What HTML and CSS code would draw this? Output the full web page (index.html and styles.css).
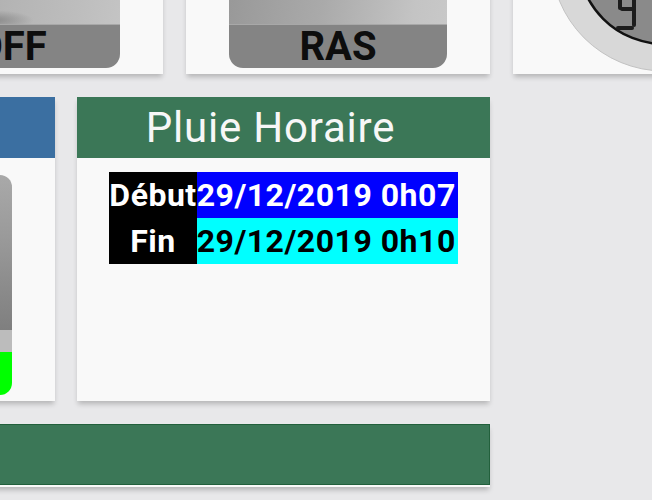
FILE: index.html
```html
<!DOCTYPE html>
<html lang="fr">
<head>
<meta charset="utf-8">
<title>Pluie Horaire</title>
<link rel="stylesheet" href="styles.css">
</head>
<body>
<div class="board">
  <div class="row row-top">
    <div class="card card-top">
      <div class="btn">
        <div class="btn-face btn-face-off"></div>
        <div class="btn-band">OFF</div>
      </div>
    </div>
    <div class="card card-top">
      <div class="btn">
        <div class="btn-face"></div>
        <div class="btn-band">RAS</div>
      </div>
    </div>
    <div class="card card-top card-gauge">
      <svg class="gauge" viewBox="0 0 304 150" width="304" height="150">
        <circle cx="151" cy="34" r="113" fill="#d8d8d8" stroke="#c2c2c2" stroke-width="1"/>
        <circle cx="151" cy="34" r="86" fill="#8a8a8a" stroke="#111" stroke-width="2.5"/>
        <g stroke="#1c1c1c" stroke-width="4" stroke-linecap="round" fill="none">
          <path d="M107 60 L107 84"/>
          <path d="M109 85 L119 85"/>
          <path d="M121 60 L121 101"/>
          <path d="M105 104 L119 104"/>
        </g>
      </svg>
    </div>
  </div>

  <div class="row row-mid">
    <div class="card card-mid">
      <div class="card-head head-blue"></div>
      <div class="card-body">
        <div class="device">
          <div class="device-top"></div>
          <div class="device-light"></div>
          <div class="device-green"></div>
        </div>
      </div>
    </div>
    <div class="card card-mid">
      <div class="card-head head-green"><span class="title">Pluie Horaire</span></div>
      <div class="card-body">
        <table class="rain">
          <tr>
            <td class="lbl">Début</td>
            <td class="val val-start">29/12/2019 0h07</td>
          </tr>
          <tr>
            <td class="lbl">Fin</td>
            <td class="val val-end">29/12/2019 0h10</td>
          </tr>
        </table>
      </div>
    </div>
  </div>

  <div class="row row-bottom">
    <div class="card card-wide">
      <div class="card-head head-green head-bordered"></div>
      <div class="card-body body-short"></div>
    </div>
  </div>
</div>
</body>
</html>
```

FILE: styles.css
```css
html, body {
  margin: 0;
  padding: 0;
}
body {
  width: 652px;
  height: 500px;
  overflow: hidden;
  background: #e8e8ea;
  font-family: Roboto, "Liberation Sans", sans-serif;
}
.board {
  display: flex;
  flex-direction: column;
  gap: 23px;
  margin-top: -76px;
}
.row {
  display: flex;
  flex-shrink: 0;
}
.row-top {
  gap: 23px;
  margin-left: -141px;
}
.row-mid {
  gap: 22px;
  margin-left: -358px;
}
.row-bottom {
  margin-left: -10px;
}
.card {
  background: #f9f9f9;
  box-shadow: 0 4px 5px -1px rgba(0, 0, 0, 0.22);
  flex-shrink: 0;
}
.card-top {
  width: 304px;
  height: 150px;
  box-sizing: border-box;
  padding: 0 43px 6px;
  display: flex;
  flex-direction: column;
  justify-content: flex-end;
}
.card-gauge {
  padding: 0;
  overflow: hidden;
}
.gauge {
  display: block;
}
.btn {
  height: 120px;
  border-radius: 4px 4px 14px 14px;
  overflow: hidden;
  display: flex;
  flex-direction: column;
}
.btn-face {
  flex: 1;
  background:
    linear-gradient(225deg, #7c7c7c 0, #8f8f8f 5%, rgba(0,0,0,0) 9%),
    linear-gradient(100deg, #979797 0%, #aaaaaa 45%, #c4c4c4 85%, #c8c8c8 100%);
}
.btn-face-off {
  background:
    linear-gradient(225deg, #7c7c7c 0, #8f8f8f 5%, rgba(0,0,0,0) 9%),
    radial-gradient(ellipse 40px 10px at 42% 95%, #8a8a8a 0, rgba(0,0,0,0) 100%),
    linear-gradient(100deg, #a0a0a0 0%, #b4b4b4 50%, #bdbdbd 80%, #c4c4c4 100%);
}
.btn-band {
  height: 43px;
  flex-shrink: 0;
  background: #848484;
  border-top: 1px solid #a8a8a8;
  display: flex;
  align-items: center;
  justify-content: center;
  font-weight: 700;
  font-size: 40px;
  line-height: 1;
  color: #0d0d0d;
}
.card-mid {
  width: 413px;
  height: 304px;
  display: flex;
  flex-direction: column;
}
.card-head {
  height: 61px;
  flex-shrink: 0;
  display: flex;
  align-items: center;
  justify-content: center;
}
.head-blue {
  background: #3b6fa1;
}
.head-green {
  background: #3b7757;
}
.title {
  color: #f7f7f7;
  font-size: 42px;
  font-weight: 400;
  letter-spacing: 0.8px;
  padding-right: 26px;
}
.card-body {
  flex: 1;
  display: flex;
  flex-direction: column;
}
.device {
  width: 200px;
  height: 220px;
  margin: 17px 43px 0 auto;
  border-radius: 4px 12px 12px 0;
  overflow: hidden;
  display: flex;
  flex-direction: column;
}
.device-top {
  flex: 1;
  background: linear-gradient(180deg, #a9a9a9 0%, #9a9a9a 40%, #7f7f7f 100%);
}
.device-light {
  height: 22px;
  background: #bcbcbc;
}
.device-green {
  height: 43px;
  background: #00ff00;
}
.rain {
  border-collapse: collapse;
  margin: 14px auto 0;
  font-weight: 700;
  font-size: 32px;
  letter-spacing: 0.5px;
}
.rain td {
  height: 46px;
  padding: 0;
  white-space: nowrap;
}
.lbl {
  width: 87px;
  background: #000;
  color: #fff;
  text-align: center;
}
.val {
  width: 261px;
  text-align: left;
}
.val-start {
  background: #0000ff;
  color: #fff;
}
.val-end {
  background: #00ffff;
  color: #000;
}
.card-wide {
  width: 500px;
  display: flex;
  flex-direction: column;
}
.head-bordered {
  box-sizing: border-box;
  border: 1px solid #22603c;
}
.body-short {
  height: 40px;
  margin-top: 2px;
}
```
